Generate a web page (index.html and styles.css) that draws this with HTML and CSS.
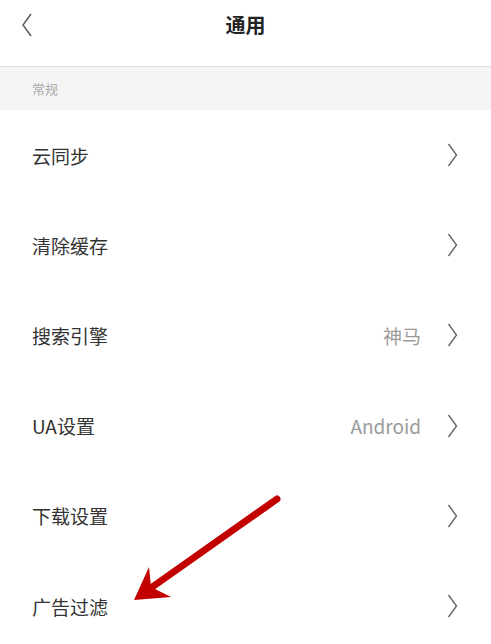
FILE: index.html
```html
<!DOCTYPE html>
<html lang="zh">
<head>
<meta charset="utf-8">
<title>通用</title>
<link rel="stylesheet" href="styles.css">
</head>
<body>
<div class="page">
  <header class="topbar">
    <svg class="back" width="12" height="24" viewBox="0 0 12 24"><path d="M10 1 L2 12 L10 23" fill="none" stroke="#555" stroke-width="1.4"/></svg>
    <h1 class="title">通用</h1>
  </header>
  <div class="section">常规</div>
  <ul class="list">
    <li class="row"><span class="label">云同步</span><span class="right"><svg class="chev" width="11" height="24" viewBox="0 0 11 24"><path d="M1.5 1 L9.5 12 L1.5 23" fill="none" stroke="#666" stroke-width="1.4"/></svg></span></li>
    <li class="row"><span class="label">清除缓存</span><span class="right"><svg class="chev" width="11" height="24" viewBox="0 0 11 24"><path d="M1.5 1 L9.5 12 L1.5 23" fill="none" stroke="#666" stroke-width="1.4"/></svg></span></li>
    <li class="row"><span class="label">搜索引擎</span><span class="right"><span class="value">神马</span><svg class="chev" width="11" height="24" viewBox="0 0 11 24"><path d="M1.5 1 L9.5 12 L1.5 23" fill="none" stroke="#666" stroke-width="1.4"/></svg></span></li>
    <li class="row"><span class="label">UA设置</span><span class="right"><span class="value">Android</span><svg class="chev" width="11" height="24" viewBox="0 0 11 24"><path d="M1.5 1 L9.5 12 L1.5 23" fill="none" stroke="#666" stroke-width="1.4"/></svg></span></li>
    <li class="row"><span class="label">下载设置</span><span class="right"><svg class="chev" width="11" height="24" viewBox="0 0 11 24"><path d="M1.5 1 L9.5 12 L1.5 23" fill="none" stroke="#666" stroke-width="1.4"/></svg></span></li>
    <li class="row"><span class="label">广告过滤</span><span class="right"><svg class="chev" width="11" height="24" viewBox="0 0 11 24"><path d="M1.5 1 L9.5 12 L1.5 23" fill="none" stroke="#666" stroke-width="1.4"/></svg></span></li>
  </ul>
  <svg class="arrow" width="491" height="644" viewBox="0 0 491 644">
    <line x1="277" y1="499" x2="148" y2="590" stroke="#c20000" stroke-width="7" stroke-linecap="round"/>
    <path d="M134 600 L149 567 L151 587 L171 597 Z" fill="#c20000"/>
  </svg>
</div>
</body>
</html>
```

FILE: styles.css
```css
html, body {
  margin: 0;
  padding: 0;
  overflow: hidden;
  background: #fff;
}
body {
  font-family: "Noto Sans CJK SC", "Noto Sans", sans-serif;
}
.page {
  position: relative;
  width: 491px;
  height: 644px;
  overflow: hidden;
}
.topbar {
  position: relative;
  height: 66px;
  border-bottom: 1px solid #dcdcdc;
  display: flex;
  justify-content: center;
  align-items: flex-start;
  box-sizing: border-box;
  height: 67px;
}
.back {
  position: absolute;
  left: 21px;
  top: 13px;
}
.title {
  margin: 0;
  font-size: 20px;
  font-weight: 700;
  color: #222;
  line-height: 50px;
}
.section {
  height: 43px;
  background: #f4f4f4;
  color: #a8a8a8;
  font-size: 13px;
  line-height: 43px;
  padding-left: 32px;
}
.list {
  list-style: none;
  margin: 0;
  padding: 0;
}
.row {
  height: 90.2px;
  display: flex;
  align-items: center;
  justify-content: space-between;
  padding: 0 33px 0 32px;
}
.label {
  font-size: 19px;
  color: #333;
}
.right {
  display: flex;
  align-items: center;
}
.value {
  font-size: 19px;
  color: #9a9a9a;
  margin-right: 26px;
}
.chev {
  display: block;
}
.arrow {
  position: absolute;
  left: 0;
  top: 0;
  pointer-events: none;
}
```
